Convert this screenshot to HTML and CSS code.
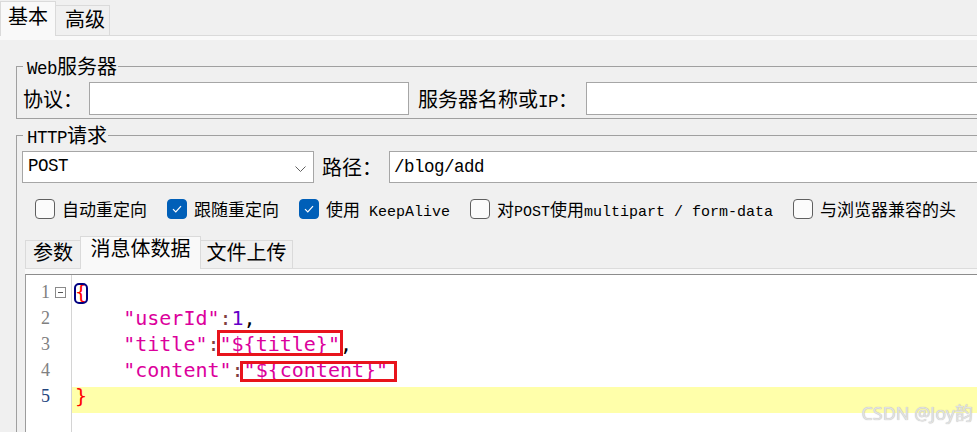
FILE: index.html
```html
<!DOCTYPE html>
<html lang="zh-CN">
<head>
    <meta charset="UTF-8">
    <title>HTTP请求</title>
    <link rel="stylesheet" href="styles.css">
</head>
<body>
    <div class="tabs">
        <div class="tab active">基本</div>
        <div class="tab">高级</div>
    </div>
    <div class="band"></div>

    <fieldset class="group">
        <legend><span class="en">Web</span>服务器</legend>
        <div class="row">
            <label class="lbl">协议：</label>
            <input class="field proto" type="text">
            <label class="lbl server">服务器名称或<span class="en">IP</span>：</label>
            <input class="field host" type="text">
        </div>
    </fieldset>

    <fieldset class="group http">
        <legend><span class="en">HTTP</span>请求</legend>
        <div class="row req">
            <div class="select">
                <span class="en">POST</span>
                <svg class="chevron" width="11" height="6" viewBox="0 0 11 6"><path d="M0.5 0.5 L5.5 5.5 L10.5 0.5" fill="none" stroke="#606060" stroke-width="1"/></svg>
            </div>
            <label class="lbl path-lbl">路径：</label>
            <input class="field path" type="text" value="/blog/add">
        </div>

        <div class="checks">
            <label class="check"><span class="box"></span><span class="txt">自动重定向</span></label>
            <label class="check"><span class="box on"><svg width="18" height="18" viewBox="0 0 18 18"><path d="M5 9.2 L7.8 12 L13 6.2" fill="none" stroke="#fff" stroke-width="1.2"/></svg></span><span class="txt">跟随重定向</span></label>
            <label class="check"><span class="box on"><svg width="18" height="18" viewBox="0 0 18 18"><path d="M5 9.2 L7.8 12 L13 6.2" fill="none" stroke="#fff" stroke-width="1.2"/></svg></span><span class="txt">使用<span class="en"> KeepAlive</span></span></label>
            <label class="check"><span class="box"></span><span class="txt">对<span class="en">POST</span>使用<span class="en">multipart / form-data</span></span></label>
            <label class="check"><span class="box"></span><span class="txt">与浏览器兼容的头</span></label>
        </div>

        <div class="subtabs">
            <div class="subtab params">参数</div>
            <div class="subtab body active">消息体数据</div>
            <div class="subtab files">文件上传</div>
        </div>

        <div class="panel">
            <div class="editor">
                <div class="gutter">
                    <div class="gline"><span class="n">1</span><span class="fold"></span></div>
                    <div class="gline"><span class="n">2</span></div>
                    <div class="gline"><span class="n">3</span></div>
                    <div class="gline"><span class="n">4</span></div>
                    <div class="gline cur"><span class="n">5</span></div>
                </div>
                <div class="code">
                    <div class="ln"><span class="sep match">{</span></div>
                    <div class="ln">&#9;<span class="str">"userId"</span><span class="op">:</span><span class="num">1</span>,</div>
                    <div class="ln">&#9;<span class="str">"title"</span><span class="op">:</span><span class="str mark">"${title}"</span>,</div>
                    <div class="ln">&#9;<span class="str">"content"</span><span class="op">:</span><span class="str mark wide">"${content}"</span></div>
                    <div class="ln cur"><span class="sep">}</span></div>
                </div>
            </div>
        </div>
    </fieldset>

    <div class="watermark">CSDN @Joy韵</div>
</body>
</html>
```

FILE: styles.css
```css
/* HTTP request sampler panel */
body {
    margin: 0;
    width: 977px;
    height: 432px;
    overflow: hidden;
    position: relative;
    background-color: #f0f0f0;
    font-family: "Noto Sans CJK SC", sans-serif;
    font-size: 20px;
    color: #000;
}

.en {
    font-family: "Liberation Mono", monospace;
    font-size: 17.5px;
    line-height: 1;
    letter-spacing: -0.5px;
}

/* top tabs */
.tabs {
    display: flex;
    align-items: flex-end;
    height: 35px;
    border-bottom: 1px solid #dadada;
}

.tab {
    box-sizing: border-box;
    width: 54px;
    height: 30px;
    padding: 3px 0 0 9px;
    line-height: 20px;
    border-top: 1px solid #dadada;
    border-right: 1px solid #dadada;
}

.tab.active {
    width: 56px;
    height: 35px;
    margin-bottom: -1px;
    padding: 4px 0 0 7px;
    background-color: #f9f9f9;
    border-left: 1px solid #dadada;
}

.band {
    height: 4px;
    background-color: #f9f9f9;
}

/* groups */
.group {
    box-sizing: border-box;
    width: 1000px;
    min-width: 0;
    margin: 16px 0 0 16px;
    padding: 6px 0 3px 6px;
    border: 1px solid #a0a0a0;
}

.group legend {
    box-sizing: border-box;
    height: 20px;
    padding: 0 1px 0 4px;
    line-height: 20px;
    overflow: visible;
}

.http {
    margin-top: 6px;
    height: 420px;
}

.row {
    display: flex;
    align-items: center;
    height: 33px;
}

.row.req {
    height: 32px;
}

.lbl {
    height: 20px;
    line-height: 20px;
    white-space: nowrap;
}

.field {
    box-sizing: border-box;
    height: 33px;
    margin: 0;
    padding: 0 4px;
    border: 1px solid #a6a6a6;
    background-color: #fff;
    font-family: "Liberation Mono", monospace;
    font-size: 17.5px;
    letter-spacing: -0.5px;
    color: #000;
    outline: none;
}

.proto {
    width: 320px;
    margin-left: 6px;
}

.server {
    margin-left: 9px;
}

.host {
    width: 420px;
    margin-left: 8px;
}

.select {
    box-sizing: border-box;
    width: 292px;
    height: 32px;
    margin-left: -1px;
    padding: 0 7px 0 5px;
    display: flex;
    align-items: center;
    justify-content: space-between;
    border: 1px solid #a6a6a6;
    background-color: #fff;
}

.chevron {
    margin-top: 3px;
}

.path-lbl {
    margin-left: 8px;
}

.path {
    width: 620px;
    height: 32px;
    margin-left: 7px;
}

/* checkboxes */
.checks {
    display: flex;
    align-items: center;
    gap: 20px;
    height: 21px;
    margin: 15px 0 0 12px;
    font-size: 17px;
}

.check {
    display: flex;
    align-items: center;
    gap: 7px;
    height: 21px;
    white-space: nowrap;
}

.check .txt {
    height: 20px;
    line-height: 20px;
}

.check .en {
    font-size: 15px;
    letter-spacing: 0;
}

.box {
    box-sizing: border-box;
    width: 20px;
    height: 20px;
    border: 1px solid #5f5f5f;
    border-radius: 4px;
    background-color: #fbfbfb;
}

.box.on {
    background-color: #005fb8;
    border-color: #005fb8;
}

.box svg {
    display: block;
}

/* sub tabs */
.subtabs {
    display: flex;
    align-items: flex-end;
    height: 32px;
    margin: 17px 0 0 2px;
    border-bottom: 1px solid #dcdcdc;
}

.subtab {
    box-sizing: border-box;
    height: 28px;
    padding-top: 1px;
    line-height: 20px;
    text-align: center;
    border: 1px solid #dadada;
    border-bottom: none;
}

.subtab + .subtab {
    margin-left: -1px;
}

.subtab.params {
    width: 56px;
}

.subtab.body {
    width: 121px;
}

.subtab.files {
    width: 93px;
}

.subtab.active {
    position: relative;
    height: 33px;
    margin-bottom: -1px;
    background-color: #f9f9f9;
}

.panel {
    margin-left: 2px;
    padding-top: 5px;
    background-color: #f9f9f9;
}

/* editor */
.editor {
    display: flex;
    height: 200px;
    background-color: #fff;
    border-top: 1px solid #8c8c8c;
    border-left: 1px solid #9c9c9c;
}

.gutter {
    flex: none;
    width: 45px;
    padding-top: 8px;
    border-right: 1px solid #d4d4d4;
}

.gline {
    display: flex;
    height: 26px;
    line-height: 18px;
    font-family: "Liberation Serif", serif;
    font-size: 18px;
    color: #808080;
}

.gline.cur {
    color: #23457e;
}

.gline .n {
    width: 24px;
    text-align: right;
}

.fold {
    position: relative;
    box-sizing: border-box;
    width: 11px;
    height: 11px;
    margin: 4px 0 0 5px;
    border: 1px solid #8a8a8a;
    background-color: #fff;
}

.fold::after {
    content: "";
    position: absolute;
    left: 2px;
    right: 2px;
    top: 4px;
    height: 1px;
    background-color: #555;
}

.code {
    flex: 1;
    padding-top: 8px;
    font-family: "DejaVu Sans Mono", monospace;
    font-size: 20px;
}

.ln {
    box-sizing: border-box;
    height: 26px;
    padding-left: 3px;
    line-height: 18px;
    white-space: pre;
    tab-size: 4;
}

.ln.cur {
    background-color: #ffffaa;
}

.str { color: #dc009c; }
.num { color: #6400c8; }
.op { color: #804040; }
.sep { color: #ff0000; }

.match {
    position: relative;
}

.match::after {
    content: "";
    position: absolute;
    left: -1px;
    right: -1px;
    top: 3px;
    bottom: 0;
    border: 2px solid #000080;
    border-radius: 5px;
}

/* red annotation boxes */
.mark {
    position: relative;
}

.mark::after {
    content: "";
    position: absolute;
    left: -3px;
    right: -3px;
    top: -2px;
    bottom: 0;
    border: 3px solid #e8141c;
}

.mark.wide::after {
    left: -4px;
    right: -9px;
    top: 3px;
}

.watermark {
    position: absolute;
    right: 4px;
    top: 401px;
    font-family: "Noto Sans", "Noto Sans CJK SC", sans-serif;
    font-size: 18px;
    line-height: 24px;
    color: #e2e2e2;
    text-shadow: 0 0 1px #a8a8a8;
}
```
